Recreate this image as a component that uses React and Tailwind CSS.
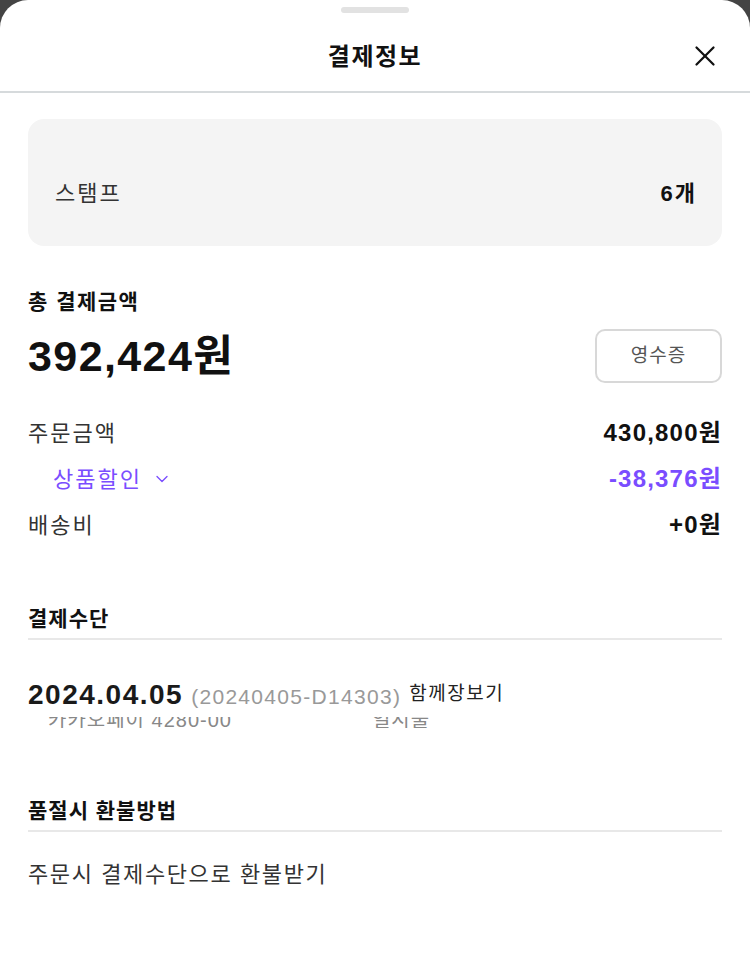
import { ChevronDown, X } from "lucide-react";

const font = { fontFamily: '"Liberation Sans", "Noto Sans CJK KR", sans-serif' };

const Row = ({ label, value }) => (
    <div className="flex items-center justify-between h-[30px]">
        <span className="text-[22px] tracking-[2px] text-[#333]">{label}</span>
        <span className="text-[24px] font-bold tracking-[1.2px] text-[#111]">{value}</span>
    </div>
);

const SectionTitle = ({ children, className = "" }) => (
    <div className={`border-b-2 border-[#e8e8e8] pb-[5px] ${className}`}>
        <h3 className="text-[21px] font-bold tracking-[1px] text-[#111] leading-[28px]">{children}</h3>
    </div>
);

export default function App() {
    return (
        <div className="w-[750px] h-[969px] bg-[#444]" style={font}>
            <div className="h-full bg-white rounded-t-[28px] overflow-hidden text-[#222]">
                <div className="flex justify-center pt-[7px]">
                    <div className="w-[68px] h-[6px] rounded-full bg-[#e2e2e2]" />
                </div>
                <div className="relative flex items-center justify-center h-[80px] pt-[10px] border-b-2 border-[#d6dadc]">
                    <h2 className="text-[24px] font-bold tracking-[1.5px] text-[#111]">결제정보</h2>
                    <button className="absolute right-[28px] top-[26px] text-[#111]">
                        <X size={34} strokeWidth={1.6} />
                    </button>
                </div>

                <div className="px-[28px]">
                    <div className="mt-[26px] rounded-[16px] bg-[#f4f4f4] pl-[27px] pr-[25px] pt-[61px] pb-[38px] flex items-center justify-between">
                        <span className="text-[22px] tracking-[2px] text-[#333] leading-[28px]">스탬프</span>
                        <span className="text-[22px] font-bold tracking-[2px] text-[#111] leading-[28px]">6개</span>
                    </div>

                    <h3 className="mt-[42px] text-[21px] font-bold tracking-[1.5px] text-[#111] leading-[28px]">총 결제금액</h3>
                    <div className="mt-[13px] flex items-center justify-between">
                        <span className="text-[43px] font-bold text-[#111] leading-[50px] tracking-[1.4px]">392,424원</span>
                        <button className="w-[127px] h-[54px] rounded-[10px] border-2 border-[#d8d8d8] text-[19px] tracking-[1px] text-[#555]">
                            영수증
                        </button>
                    </div>

                    <div className="mt-[35px] flex flex-col gap-[16px]">
                        <Row label="주문금액" value="430,800원" />
                        <div className="flex items-center justify-between h-[30px] text-[#7a4dff]">
                            <span className="flex items-center gap-[10px] pl-[25px] text-[22px] tracking-[2px]">
                                상품할인 <ChevronDown size={20} strokeWidth={1.6} />
                            </span>
                            <span className="text-[24px] font-bold tracking-[1.2px]">-38,376원</span>
                        </div>
                        <Row label="배송비" value="+0원" />
                    </div>

                    <SectionTitle className="mt-[65px]">결제수단</SectionTitle>
                    <div className="mt-[34px] flex items-baseline gap-[8px]">
                        <span className="text-[28px] font-bold tracking-[1.5px] text-[#1a1a1a]">2024.04.05</span>
                        <span className="text-[21px] tracking-[1.3px] text-[#999]">(20240405-D14303)</span>
                        <span className="text-[19px] tracking-[1.5px] text-[#222] relative -top-[4px]">함께장보기</span>
                    </div>
                    <div className="mt-[1px] h-[11px] overflow-hidden">
                        <div className="-mt-[12px] flex text-[20px] tracking-[1px] text-[#888]">
                            <span className="pl-[20px]">카카오페이 4280-00</span>
                            <span className="pl-[140px]">일시불</span>
                        </div>
                    </div>

                    <SectionTitle className="mt-[69px]">품절시 환불방법</SectionTitle>
                    <p className="mt-[26px] text-[22px] tracking-[1.6px] text-[#333]">주문시 결제수단으로 환불받기</p>
                </div>
            </div>
        </div>
    );
}
